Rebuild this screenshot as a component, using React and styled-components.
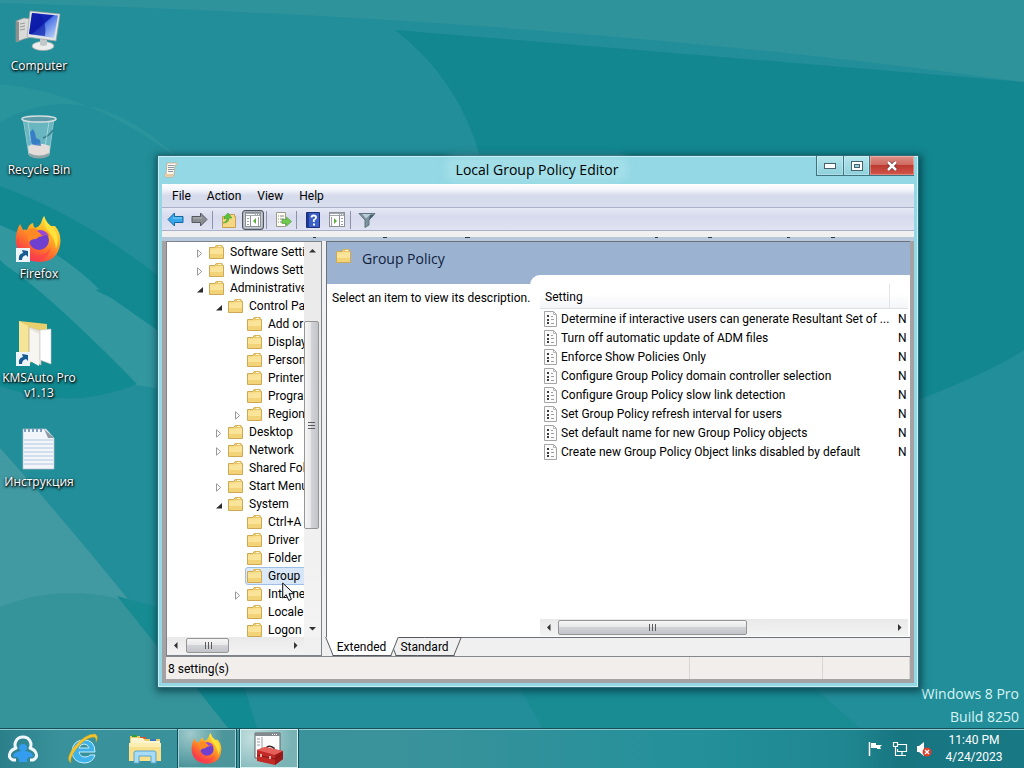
import React, { useState } from "react";
import styled, { createGlobalStyle, css } from "styled-components";

const GlobalStyle = createGlobalStyle`
  * {
    box-sizing: border-box;
  }

  body {
    margin: 0;
    font-family: "Open Sans", "Noto Sans", sans-serif;
    font-size: 12px;
    line-height: 16px;
    color: #000;
  }

  button {
    margin: 0;
    padding: 0;
    border: 0;
    background: none;
    font: inherit;
    color: inherit;
  }

  svg {
    display: block;
    flex: none;
  }
`;

const Screen = styled.div`
  display: flex;
  flex-direction: column;
  min-height: 100vh;
  overflow: hidden;
  background: #228e99;
`;

const Desktop = styled.main`
  position: relative;
  flex: 1;
`;

const WallpaperArt = styled.svg`
  position: absolute;
  top: 0;
  left: 0;
  width: 100%;
  height: 100%;
`;

/* desktop shortcuts */

const Shortcuts = styled.nav`
  position: relative;
  display: flex;
  flex-direction: column;
  width: 78px;
`;

const Shortcut = styled.a`
  display: flex;
  flex-direction: column;
  align-items: center;
  gap: 2px;
  height: 104px;
  padding-top: 8px;
  color: #fff;
  line-height: 15px;
  text-align: center;
  text-decoration: none;
  text-shadow: 1px 1px 2px #000, 0 1px 3px #000;
`;

const Watermark = styled.div`
  position: absolute;
  right: 5px;
  bottom: 0;
  color: #d8f4f6;
  font-size: 14px;
  line-height: 23px;
  text-align: right;
`;

/* window frame */

const Window = styled.section`
  position: absolute;
  top: 155px;
  right: 105px;
  bottom: 40px;
  left: 157px;
  display: flex;
  flex-direction: column;
  padding: 0 4px 4px;
  border: 1px solid #2d6b77;
  background: #93d8e4;
  box-shadow: inset 0 0 0 1px #c6f1f6, 1px 2px 7px 2px rgba(0, 40, 50, 0.6);
`;

const TitleBar = styled.header`
  display: flex;
  align-items: center;
  flex: none;
  height: 28px;
  padding-left: 2px;
`;

const Title = styled.h1`
  flex: 1;
  margin: 0 0 0 80px;
  font-size: 14px;
  font-weight: 400;
  line-height: 20px;
  text-align: center;

  span {
    padding: 0 8px;
    border-radius: 8px;
    background: rgba(190, 236, 240, 0.35);
    box-shadow: 0 0 8px 3px rgba(190, 236, 240, 0.35);
  }
`;

const Captions = styled.div`
  display: flex;
  align-self: flex-start;
  border: solid #3c7482;
  border-width: 0 0 1px 1px;
`;

const Caption = styled.button`
  display: flex;
  align-items: center;
  justify-content: center;
  width: ${(p) => (p.$close ? 45 : 26)}px;
  height: 19px;
  border-left: ${(p) => (p.$first ? 0 : "1px solid #3c7482")};
  background: ${(p) =>
    p.$close
      ? "linear-gradient(#dd9187 0, #cf6b60 45%, #bd3a30 50%, #d2564a 100%)"
      : "linear-gradient(#b4e6ec, #8ed0dc)"};
  box-shadow: inset 0 0 0 1px rgba(255, 255, 255, 0.3);
`;

const Client = styled.div`
  display: flex;
  flex: 1;
  flex-direction: column;
  min-height: 0;
  padding-bottom: 4px;
  background: #a5a2a3;
  font-family: Roboto, "Open Sans", sans-serif;
`;

const MenuBar = styled.nav`
  display: flex;
  flex: none;
  height: 24px;
  padding: 0 2px;
  border-bottom: 1px solid #a9b2c9;
  background: linear-gradient(#fff 0, #f4f5fa 25%, #d6dbec 50%, #d9deed 100%);
`;

const MenuItem = styled.button`
  padding: 0 8px;
`;

const Toolbar = styled.div`
  display: flex;
  align-items: center;
  gap: 2px;
  flex: none;
  height: 23px;
  padding: 1px 2px 0;
  border-bottom: 1px solid #a9b2c9;
  background: linear-gradient(#e6e9f6, #d7dbed 40%, #dfe2f2);
`;

const Tool = styled.button`
  display: flex;
  align-items: center;
  justify-content: center;
  width: 22px;
  height: 20px;
  ${(p) =>
    p.$pressed &&
    css`
      border: 1px solid #50575f;
      border-radius: 3px;
      background: #cdd2dc;
      box-shadow: inset 0 0 2px #555;
    `}
`;

const Separator = styled.span`
  width: 1px;
  height: 18px;
  margin-right: 3px;
  background: #8a93a8;
`;

const Strip = styled.div`
  flex: none;
  height: 10px;
  padding-top: 6px;
  background: linear-gradient(#f0f0f0 6px, #b6c8da 6px);
`;

const Body = styled.div`
  display: flex;
  gap: 4px;
  flex: 1;
  min-height: 0;
  margin: 0 4px;
  background: #f0f0f0;
`;

/* tree pane */

const TreePane = styled.aside`
  display: grid;
  grid-template-columns: 1fr 17px;
  grid-template-rows: 1fr 17px;
  width: 156px;
  padding-bottom: 1px;
  border: 1px solid #7d828b;
  background: #f0f0f0;
`;

const Tree = styled.ul`
  min-height: 0;
  margin: 0;
  padding: 1px 0 0;
  overflow: hidden;
  background: #fff;
  list-style: none;
`;

const TreeRow = styled.li`
  display: flex;
  height: 18px;
  padding-left: ${(p) => 27 + p.$level * 19}px;
  white-space: nowrap;
`;

const Expander = styled.button`
  display: flex;
  align-items: center;
  flex: none;
  width: 13px;
  padding: 2px 0 0 3px;
`;

const NodeLabel = styled.button`
  display: flex;
  flex: none;
  align-items: center;
  gap: 6px;
  min-width: 160px;
  padding-left: 1px;
  border: 1px solid transparent;
  ${(p) =>
    p.$selected &&
    css`
      border-color: #9ec0e6;
      border-radius: 3px;
      background: linear-gradient(90deg, #dce9f8, #cbe0f7);
    `}
`;

/* scrollbars */

const ScrollBar = styled.div`
  display: flex;
  flex-direction: ${(p) => (p.$vertical ? "column" : "row")};
  align-items: stretch;
  background: linear-gradient(#e9e9e9, #f3f3f3);
`;

const ScrollArrow = styled.button`
  display: flex;
  align-items: center;
  justify-content: center;
  flex: none;
  width: 17px;
  height: 17px;
`;

const ScrollGap = styled.span`
  flex: ${(p) => p.$grow};
`;

const Thumb = styled.span`
  display: flex;
  align-items: center;
  justify-content: center;
  flex: ${(p) => p.$grow};
  margin: ${(p) => (p.$vertical ? "0 2px 0 0" : "1px 0")};
  border: 1px solid #959595;
  border-radius: 2px;
  background: linear-gradient(
    ${(p) => (p.$vertical ? "90deg" : "180deg")},
    #f6f6f6 0,
    #e8e8ea 45%,
    #d2d3d7 50%,
    #c3c4c9 100%
  );
`;

/* result pane */

const ResultPane = styled.section`
  display: flex;
  flex: 1;
  flex-direction: column;
  min-width: 0;
`;

const View = styled.div`
  display: flex;
  flex: 1;
  flex-direction: column;
  min-height: 0;
  border: solid #6b7079;
  border-width: 1px 0 0 1px;
  background: #9bb3d1;
`;

const ViewHeader = styled.header`
  display: flex;
  gap: 11px;
  flex: none;
  height: 33px;
  padding: 6px 0 0 9px;
`;

const ViewTitle = styled.h2`
  margin: 0;
  color: #10203c;
  font-family: "Open Sans", sans-serif;
  font-size: 14px;
  font-weight: 400;
  line-height: 21px;
`;

const Columns = styled.div`
  display: flex;
  flex: 1;
  min-height: 0;
`;

const Description = styled.p`
  flex: none;
  width: 203px;
  margin: 9px 0 0;
  padding: 6px 0 0 5px;
  background: #fff;
  white-space: nowrap;
`;

const ListArea = styled.div`
  display: flex;
  flex: 1;
  flex-direction: column;
  justify-content: space-between;
  min-width: 0;
  padding: 9px 2px 1px 10px;
  border-radius: 10px 0 0 0;
  background: #fff;
`;

const TableClip = styled.div`
  overflow: hidden;
`;

const Table = styled.table`
  width: 100%;
  border-collapse: separate;
  border-spacing: 0;
  table-layout: fixed;
`;

const StateColumn = styled.col`
  width: 19px;
`;

const HeadCell = styled.th`
  height: 25px;
  padding: 2px 5px 0;
  border-bottom: 1px solid #dcdfe4;
  background: linear-gradient(#fff 40%, #f4f5f7);
  font-weight: 400;
  text-align: left;

  & + & {
    border-left: 1px solid #e1e4e9;
  }
`;

const Cell = styled.td`
  height: 19px;
  padding: 0 0 0 ${(p) => p.$pad}px;
  white-space: nowrap;
`;

const Setting = styled.span`
  display: flex;
  align-items: center;
  gap: 3px;
`;

const Tabs = styled.div`
  display: flex;
  flex: none;
  height: 19px;
`;

const TabFill = styled.span`
  flex: 1;
  border-top: 1px solid #6b7079;
`;

const Tab = styled.button`
  position: relative;
  z-index: ${(p) => (p.$active ? 1 : 0)};
  width: 71px;
  margin-right: -8px;

  &:last-of-type {
    margin-right: -4px;
  }

  &::before,
  &::after {
    content: "";
    position: absolute;
    z-index: -1;
    top: 0;
    bottom: 0;
    left: 3px;
    width: 50%;
    border: solid #55595f;
    border-width: ${(p) => (p.$active ? "0" : "1px")} 0 1px 1px;
    background: ${(p) => (p.$active ? "#fff" : "#f0f0f0")};
    transform: skewX(22deg);
  }

  &::after {
    right: 3px;
    left: auto;
    border-width: ${(p) => (p.$active ? "0" : "1px")} 1px 1px 0;
    transform: skewX(-22deg);
  }
`;

const StatusBar = styled.footer`
  display: flex;
  flex: none;
  height: 23px;
  margin: 0 4px;
  border-top: 1px solid #85888d;
  background: #f1eeec;
`;

const StatusCell = styled.span`
  flex: ${(p) => (p.$width ? "none" : 1)};
  width: ${(p) => p.$width || "auto"};
  padding: 4px 2px 0;
  border-right: 1px solid #d8d5d3;
`;

/* taskbar */

const Taskbar = styled.footer`
  position: relative;
  display: flex;
  align-items: stretch;
  height: 40px;
  border-top: 1px solid #174e58;
  background: linear-gradient(90deg, #2b7f8a 0, #39929b 60px, #3a929b 400px, #23909a 700px, #1f8690 850px, #177580 900px, #187985 100%);
  box-shadow: inset 0 1px 0 #8accd2;
`;

const TaskButtons = styled.nav`
  display: flex;
  gap: 4px;
  flex: 1;
`;

const TaskButton = styled.button`
  display: flex;
  align-items: center;
  justify-content: center;
  width: ${(p) => (p.$first ? 50 : 58)}px;
  padding-right: ${(p) => (p.$first ? 4 : 0)}px;
  ${(p) =>
    p.$open &&
    css`
      border: 1px solid ${p.$active ? "#d9f3f3" : "#9fd3d6"};
      background: ${p.$active
        ? "radial-gradient(circle at 20% 20%, #c4dfdf, #79b3b6 75%)"
        : "radial-gradient(circle at 20% 10%, #9fcacc, #4b959b 60%)"};
      box-shadow: 0 0 0 1px #12515b;
    `}
`;

const Tray = styled.div`
  display: flex;
  align-items: center;
  gap: 8px;
  padding-right: 16px;
  color: #fff;
`;

const Clock = styled.time`
  width: 68px;
  font-family: Roboto, "Open Sans", sans-serif;
  line-height: 17px;
  text-align: center;
`;

const Pointer = styled.svg`
  position: absolute;
  top: 582px;
  left: 282px;
`;

const Wallpaper = () => (
  <WallpaperArt viewBox="0 0 1024 728" preserveAspectRatio="none" aria-hidden="true">
    <rect width="1024" height="728" fill="#228e99" />
    <path d="M395 30Q460 80 481 160L700 400H918Q990 372 1024 350V82Z" fill="#128790" />
    <path d="M0 0H1024V82Q560 18 0 3Z" fill="#2f939c" />
    <path d="M0 84Q90 92 180 160Q90 72 0 122Z" fill="#2a949d" />
    <path d="M0 186Q80 215 157 275V380L0 300Z" fill="#128991" />
    <path d="M0 225Q60 250 100 290L157 330V388L135 385Q70 330 0 260Z" fill="#3397a0" />
    <path d="M0 262Q40 285 137 384Q70 412 0 386Z" fill="#128a91" />
    <path d="M95 290L157 320V280Z" fill="#128991" />
    <path d="M0 448Q100 560 230 728H0Z" fill="#4199a2" />
    <path d="M0 607Q70 578 157 610L200 680L228 728H0Z" fill="#35939a" />
    <path d="M117 596L157 607V646Z" fill="#178b92" />
    <path d="M190 680H242L257 728H228Z" fill="#128a91" />
    <path d="M515 680L543 728H860L805 680Z" fill="#188b93" />
  </WallpaperArt>
);

const ComputerIcon = () => (
  <svg width="48" height="48" viewBox="0 0 48 48">
    <defs>
      <linearGradient id="monitor" x1="0" x2="1" y2="1">
        <stop offset="0" stopColor="#1730c4" />
        <stop offset=".45" stopColor="#1022b0" />
        <stop offset=".5" stopColor="#4f78e8" />
        <stop offset="1" stopColor="#c9dffb" />
      </linearGradient>
    </defs>
    <path d="M1 13l8-3 8 1v18l-8 2-8 3z" fill="#d9dbd8" stroke="#8e9494" strokeWidth=".7" />
    <path d="M1 13l3 1v20l-3 0z" fill="#8b8f8e" />
    <path d="M5 16l5-1M5 19l5-1M5 22l5-1" stroke="#999" />
    <ellipse cx="28" cy="38" rx="11" ry="4.500" fill="#eceeed" stroke="#9fa6a6" strokeWidth=".7" />
    <path d="M25 29l7 1v7q-4 2-7 0z" fill="#c3c8c8" />
    <path d="M15 3l30 3-4 27-29-4z" fill="#e3e5e4" stroke="#9aa1a4" strokeWidth=".7" />
    <path d="M17 5l26 2.500-4 22.500-25-4z" fill="url(#monitor)" />
    <path d="M17 5l8 1q7 9 5 22l-16-2z" fill="#0b18a4" opacity=".65" />
  </svg>
);

const BinIcon = () => (
  <svg width="48" height="48" viewBox="0 0 48 48">
    <path d="M8 6l6 37q10 5 20 0l5-37z" fill="#8fcbd6" opacity=".65" stroke="#c7e6ea" />
    <path d="M13 34l1 9q10 5 20 0l1-9q-11-5-22 0z" fill="#e4ddd9" />
    <path d="M14 41q10 5 20 0v3q-10 5-20 0z" fill="#92a6aa" />
    <path d="M15 31V20l3-3 2 4 1 5 4 2 1 6-7-1z" fill="#2a72c6" opacity=".8" />
    <path d="M28 26q6-2 10-8" fill="none" stroke="#367f8c" strokeWidth="1.500" />
    <path d="M13 10l4 28M34 10l-4 25" stroke="#c9edf0" opacity=".6" />
    <ellipse cx="24" cy="7" rx="17" ry="3" fill="#5e9ba8" stroke="#d5dfe0" strokeWidth="1.500" />
  </svg>
);

const Badge = () => (
  <g>
    <rect x="1" y="32" width="14" height="14" fill="#eef5fa" />
    <path d="M4 44q-1-6 4-7l-1-3 6 1v6l-2-2q-4 1-4 5z" fill="#175a94" />
  </g>
);

const FirefoxArt = () => (
  <g>
    <defs>
      <linearGradient id="fox" x1=".8" x2=".2" y1="0" y2="1">
        <stop offset="0" stopColor="#fff04a" />
        <stop offset=".35" stopColor="#ffb224" />
        <stop offset=".65" stopColor="#ff6a2f" />
        <stop offset="1" stopColor="#f0245e" />
      </linearGradient>
    </defs>
    <path d="M29 0q2 7 7 10l4 0q7 8 5 19-3 17-21 17Q4 45 1 27 0 17 5 8l3 6q2-1 4 0 2-6 6-7 0 3 2 5 4-1 6-5 1-4 3-7z" fill="url(#fox)" />
    <circle cx="24" cy="24" r="10" fill="#6f3fd0" />
    <path d="M14 13q6-2 10 2 8-2 11 6-5-4-7-1-4 0-7 3-6 0-7 4-3-6 0-14z" fill="#ff8a25" />
    <path d="M22 15q7-3 12 5-4-3-7 0-1-3-5-5z" fill="#9646dd" />
    <path d="M3 20q1 17 15 19 13 2 18-8-3 14-17 14Q5 44 2 28z" fill="#ff3d4c" opacity=".6" />
    <path d="M29 0q2 7 9 12 8 9 3 21-1-10-6-16-7-7-6-17z" fill="#ffe23c" />
  </g>
);

const FirefoxIcon = () => (
  <svg width="48" height="48" viewBox="0 0 48 48">
    <FirefoxArt />
    <Badge />
  </svg>
);

const ZipFolderIcon = () => (
  <svg width="48" height="48" viewBox="0 0 48 48">
    <path d="M4 1l28 3v32L12 44 4 35z" fill="#e8cf6c" />
    <path d="M4 1l9 5v40l-9-7z" fill="#f6e596" />
    <path d="M14 7l12 4v34l-12-5z" fill="#e9e4dc" stroke="#c9c3b8" strokeWidth=".6" />
    <path d="M25 10l11-1v35l-11-4z" fill="#fff" stroke="#c5c5c5" strokeWidth=".6" />
    <path d="M15 9l9 5v32l-9-5z" fill="#f7f5f1" />
    <Badge />
  </svg>
);

const NoteIcon = () => (
  <svg width="48" height="48" viewBox="0 0 48 48">
    <path d="M8 5h23l8 9v31H8z" fill="#f2f5fa" stroke="#b5c2cc" strokeWidth=".7" />
    <path d="M29 5l10 9h-6z" fill="#8b9aa4" />
    <path d="M9 16h29M9 20h29M9 24h29M9 28h29M9 32h29M9 36h29M9 40h29" stroke="#b5c6dc" />
    <path d="M10 5v3m4-3v3m4-3v3m4-3v3m4-3v3" stroke="#5f84a8" strokeWidth="1.500" />
  </svg>
);

const FolderIcon = () => (
  <svg width="15" height="16" viewBox="0 0 15 16">
    <path d="M.5 3.500h5.500l1-2h6l.5 2h1v11H.5z" fill="#f6dc87" stroke="#cda955" />
    <path d="M7.500 3V1.500h5V4h-6z" fill="#e9c565" />
    <path d="M9 2.500h3" stroke="#fff8d8" />
    <path d="M1 5.500h6l1-1h6V14H1z" fill="#fae49a" />
    <path d="M1 10h13v4H1z" fill="#f3d378" />
  </svg>
);

const ScrollDocIcon = () => (
  <svg width="14" height="16" viewBox="0 0 14 16">
    <path d="M3 1h9q2 0 1 2h-2l-1 9q0 3-2 3H2q-2 0-1-3h1z" fill="#fbf8f0" stroke="#c2a888" strokeWidth=".8" />
    <path d="M4 3.500h6M4 5.500h6M4 7.500h6M4 9.500h5" stroke="#8f9aa8" />
    <path d="M1 12h8v2.500H2z" fill="#e9c9a2" />
  </svg>
);

const PolicyIcon = () => (
  <svg width="14" height="16" viewBox="0 0 14 16">
    <path d="M.5.500h9l3 3v12H.5z" fill="#fbfbfb" stroke="#a3a5a7" />
    <path d="M9.500.500v3h3" fill="none" stroke="#b4b6b8" />
    <path d="M3 4h2v2H3zM3 8h2v2H3zM3 11h2v2H3z" fill="#3a3a3a" />
    <path d="M7 5.500h2M7 8.500h3M7 12.500h3" stroke="#9a9da1" />
  </svg>
);

const ArrowIcon = ({ forward }) => (
  <svg width="17" height="15" viewBox="0 0 17 15">
    <path
      d={forward ? "M16 7.500L9.500 1v3.500H1v6h8.500V14z" : "M1 7.500L7.500 1v3.500H16v6H7.500V14z"}
      fill={forward ? "#8b8e93" : "#35a7ea"}
      stroke={forward ? "#55585d" : "#14669f"}
    />
    <path d={forward ? "M2 6h9" : "M6 6h9"} stroke={forward ? "#b6b9bd" : "#8bd3fb"} />
  </svg>
);

const UpFolderIcon = () => (
  <svg width="16" height="16" viewBox="0 0 16 16">
    <path d="M1.500 4.500h6l1-2h5v2h1v11h-13z" fill="#f4d883" stroke="#c9a04f" />
    <path d="M2 11q4-1 4-5L3 7V5l4-4 4 5-3 0q0 5-6 5z" fill="#5cc23b" stroke="#3a9427" strokeWidth=".5" />
  </svg>
);

const PaneIcon = ({ right }) => (
  <svg width="16" height="15" viewBox="0 0 16 15">
    <rect x=".5" y=".5" width="15" height="14" fill="#fff" stroke="#8b9097" />
    <path d="M1 1h14v3H1z" fill="#a2a7ae" />
    <path d="M1 2.500h9m1 0h1m1 0h1" stroke="#fff" />
    <path d={right ? "M10.500 4v10" : "M5.500 4v10"} stroke="#8b9097" />
    <path
      d={right ? "M12 6.500h2M12 9.500h2M12 12.500h2M2.500 5v9" : "M2 6.500h2M2 9.500h2M2 12.500h2M13.500 5v9"}
      stroke="#9aa0a8"
    />
    <path d={right ? "M5 6v6l3-3z" : "M11 6v6L8 9z"} fill="#5fae3b" />
  </svg>
);

const ExportIcon = () => (
  <svg width="17" height="16" viewBox="0 0 17 16">
    <path d="M1.500.500h9v14h-9z" fill="#fffdf0" stroke="#9d9b8f" />
    <path d="M3 4h1m1 0h4M3 7h1m1 0h4M3 10h1m1 0h4" stroke="#7d8792" />
    <path d="M7 7.500h4.500V5l5 4.500-5 4.500v-2.500H7z" fill="#71ca4f" stroke="#3f9a2b" strokeWidth=".6" />
  </svg>
);

const HelpIcon = () => (
  <svg width="14" height="16" viewBox="0 0 14 16">
    <path d="M.5.500h13v15H.5z" fill="#3a5fc8" stroke="#1c2f78" />
    <path d="M1 1h2v14H1z" fill="#1f3a94" />
    <path d="M5.500 5.500q0-2 2.300-2t2.200 2q0 1.500-2.200 2.500v2" fill="none" stroke="#fff" strokeWidth="1.800" />
    <path d="M7 11.500h2v2H7z" fill="#fff" />
  </svg>
);

const FilterIcon = () => (
  <svg width="18" height="16" viewBox="0 0 18 16">
    <path d="M1 1.500h16L11 8v5l-4 2.500V8z" fill="#7d919c" stroke="#5f7480" />
    <path d="M4 2h9L8 6.500z" fill="#b9ccd5" />
    <path d="M12 3h4l-5 5z" fill="#42606d" />
  </svg>
);

const ExpandGlyph = ({ open }) => (
  <svg width="7" height="9" viewBox="0 0 7 9">
    {open ? (
      <path d="M6 2v5.500H0z" fill="#2b2b2b" />
    ) : (
      <path d="M.5.800v7.400L4.700 4.500z" fill="#fff" stroke="#9a9a9a" />
    )}
  </svg>
);

const arrowPaths = {
  up: "M0 5.500L3.500 2 7 5.500z",
  down: "M0 2l3.500 3.500L7 2z",
  left: "M5.500 0L2 3.500 5.500 7z",
  right: "M2 0l3.500 3.500L2 7z",
};

const Chevron = ({ to }) => (
  <svg width="7" height="7" viewBox="0 0 7 7">
    <path d={arrowPaths[to]} fill="#333" />
  </svg>
);

const Grip = ({ vertical }) => (
  <svg width="8" height="8" viewBox="0 0 8 8">
    <path
      d={vertical ? "M0 1.500h7M0 4.500h7M0 7.500h7" : "M1.500 0v7M4.500 0v7M7.500 0v7"}
      stroke="#5c5c5c"
    />
  </svg>
);

const AgentIcon = () => (
  <svg width="32" height="30" viewBox="0 0 32 30">
    <path
      d="M9 26H6q-5-2-3-7 1-3 6-5-2-3 0-7 2-4 7-4t7 4q2 4 0 7 5 2 6 5 2 5-3 7h-3"
      fill="none"
      stroke="#f0f7fb"
      strokeWidth="3"
      strokeLinejoin="round"
    />
    <path d="M16 10q4 0 4 3.500 0 2-2 3.500 8 1 8 6h-4l-2 2v3h-8v-3l-2-2H6q0-5 8-6-2-1.500-2-3.500Q12 10 16 10z" fill="#359df0" />
  </svg>
);

const ExplorerEIcon = () => (
  <svg width="32" height="32" viewBox="0 0 32 32">
    <path
      fillRule="evenodd"
      d="M28 19H12q1 5 6 5 4 0 5-2h5q-2 8-11 8Q5 29 5 18 6 7 17 7q11 0 11 12zm-6-4q-1-4-5-4-4 0-5 4z"
      fill="#3fb2ea"
      stroke="#c5ecfb"
    />
    <path d="M4 30Q-2 26 7 14 18 1 28 1q4 2 1 8 1-5-3-5-8 1-16 11-8 10-6 15z" fill="#f5c62b" stroke="#dba51d" strokeWidth=".5" />
  </svg>
);

const ExplorerIcon = () => (
  <svg width="34" height="32" viewBox="0 0 34 32">
    <path d="M2 3h10v3h20v21H2z" fill="#e9cb69" />
    <path d="M4 2h5v2H4z" fill="#2f9c3e" />
    <path d="M12 4h6v2h-6z" fill="#d9532a" />
    <path d="M22 6h6v2h-6z" fill="#3578c4" />
    <path d="M3 5h12l2 3h15v3H3z" fill="#fff6cf" />
    <path d="M1 10h32v18H1z" fill="#f8e08a" />
    <path d="M1 10h32v4H1z" fill="#fceeb0" />
    <path d="M6 30V20q0-2 2-2h18q2 0 2 2v10h-5v-7H11v7z" fill="#a8dcf5" stroke="#5aa5cf" />
  </svg>
);

const ToolboxIcon = () => (
  <svg width="34" height="34" viewBox="0 0 34 34">
    <path d="M3 1h25v25H3z" fill="#fbfbfb" stroke="#5b6266" />
    <path d="M3 1h25v3H3z" fill="#83898d" />
    <path d="M20 2.500h1m1 0h1m1 0h1" stroke="#fff" />
    <path d="M5 7h3M5 10h3M5 13h3M10 5v12" stroke="#9aa0a5" />
    <path d="M15 17v-2q3-2 7 1v2" fill="none" stroke="#3a2222" strokeWidth="1.500" />
    <path d="M5 18l8-3 18 4v8l-8 6-18-4z" fill="#c22a26" />
    <path d="M5 18l8-3 18 4-8 4z" fill="#e4605a" />
    <path d="M23 23v10l8-6v-8z" fill="#9b1b1b" />
    <path d="M5 23l18 4 8-5" fill="none" stroke="#8c1512" />
    <path d="M9 22v3m9-1v3" stroke="#e8dfdf" strokeWidth="1.500" />
  </svg>
);

const FlagIcon = () => (
  <svg width="16" height="16" viewBox="0 0 16 16">
    <path d="M1.500 1v14" stroke="#fff" strokeWidth="1.500" />
    <path d="M3 2h5v2h6l-2 2 1 2H9V7H3z" fill="#fff" />
  </svg>
);

const NetworkIcon = () => (
  <svg width="16" height="16" viewBox="0 0 16 16">
    <path d="M6 3.500h8.500v7H5.500V8M10 11v3M6 14.500h8" fill="none" stroke="#fff" strokeWidth="1.200" />
    <path d="M1.500 1.500h4v4h-4zM3.500 6v8.500H7" fill="none" stroke="#fff" strokeWidth="1.200" />
  </svg>
);

const MutedIcon = () => (
  <svg width="16" height="16" viewBox="0 0 16 16">
    <path d="M1 5h2l5-4v14l-5-4H1z" fill="#fff" />
    <circle cx="11" cy="11" r="4.500" fill="#d8402f" />
    <path d="M9 9l4 4m0-4l-4 4" stroke="#fff" strokeWidth="1.300" />
  </svg>
);

const shortcuts = [
  { name: "Computer", Icon: ComputerIcon },
  { name: "Recycle Bin", Icon: BinIcon },
  { name: "Firefox", Icon: FirefoxIcon },
  { name: "KMSAuto Pro v1.13", Icon: ZipFolderIcon },
  { name: "Инструкция", Icon: NoteIcon },
];

const nodes = [
  { name: "Software Setti", level: 0, state: "closed" },
  { name: "Windows Sett", level: 0, state: "closed" },
  { name: "Administrative", level: 0, state: "open" },
  { name: "Control Pa", level: 1, state: "open" },
  { name: "Add or", level: 2 },
  { name: "Display", level: 2 },
  { name: "Person", level: 2 },
  { name: "Printer", level: 2 },
  { name: "Progra", level: 2 },
  { name: "Region", level: 2, state: "closed" },
  { name: "Desktop", level: 1, state: "closed" },
  { name: "Network", level: 1, state: "closed" },
  { name: "Shared Fol", level: 1 },
  { name: "Start Menu", level: 1, state: "closed" },
  { name: "System", level: 1, state: "open" },
  { name: "Ctrl+A", level: 2 },
  { name: "Driver", level: 2 },
  { name: "Folder", level: 2 },
  { name: "Group", level: 2 },
  { name: "Interne", level: 2, state: "closed" },
  { name: "Locale", level: 2 },
  { name: "Logon", level: 2 },
];

const settings = [
  "Determine if interactive users can generate Resultant Set of ...",
  "Turn off automatic update of ADM files",
  "Enforce Show Policies Only",
  "Configure Group Policy domain controller selection",
  "Configure Group Policy slow link detection",
  "Set Group Policy refresh interval for users",
  "Set default name for new Group Policy objects",
  "Create new Group Policy Object links disabled by default",
];

const Scroll = ({ vertical, before, thumb, after }) => (
  <ScrollBar $vertical={vertical}>
    <ScrollArrow aria-label={vertical ? "Scroll up" : "Scroll left"}>
      <Chevron to={vertical ? "up" : "left"} />
    </ScrollArrow>
    <ScrollGap $grow={before} />
    <Thumb $vertical={vertical} $grow={thumb}>
      <Grip vertical={vertical} />
    </Thumb>
    <ScrollGap $grow={after} />
    <ScrollArrow aria-label={vertical ? "Scroll down" : "Scroll right"}>
      <Chevron to={vertical ? "down" : "right"} />
    </ScrollArrow>
  </ScrollBar>
);

const TreeView = () => {
  const [selected, setSelected] = useState("Group");

  return (
    <TreePane>
      <Tree role="tree">
        {nodes.map(({ name, level, state }) => (
          <TreeRow key={name} $level={level} role="treeitem" aria-selected={name === selected}>
            {state ? (
              <Expander aria-label={`Toggle ${name}`}>
                <ExpandGlyph open={state === "open"} />
              </Expander>
            ) : (
              <Expander as="span" />
            )}
            <NodeLabel $selected={name === selected} onClick={() => setSelected(name)}>
              <FolderIcon />
              {name}
            </NodeLabel>
          </TreeRow>
        ))}
      </Tree>
      <Scroll vertical before={62} thumb={207} after={92} />
      <Scroll before={2} thumb={42} after={59} />
    </TreePane>
  );
};

const Result = () => {
  const [tab, setTab] = useState("Extended");

  return (
    <ResultPane>
      <View>
        <ViewHeader>
          <FolderIcon />
          <ViewTitle>Group Policy</ViewTitle>
        </ViewHeader>
        <Columns>
          <Description>Select an item to view its description.</Description>
          <ListArea>
            <TableClip>
              <Table>
                <colgroup>
                  <col />
                  <StateColumn />
                </colgroup>
                <thead>
                  <tr>
                    <HeadCell>Setting</HeadCell>
                    <HeadCell aria-label="State" />
                  </tr>
                </thead>
                <tbody>
                  {settings.map((name) => (
                    <tr key={name}>
                      <Cell $pad={4}>
                        <Setting>
                          <PolicyIcon />
                          {name}
                        </Setting>
                      </Cell>
                      <Cell $pad={9}>N</Cell>
                    </tr>
                  ))}
                </tbody>
              </Table>
            </TableClip>
            <Scroll before={1} thumb={188} after={145} />
          </ListArea>
        </Columns>
      </View>
      <Tabs>
        {["Extended", "Standard"].map((name) => (
          <Tab key={name} $active={name === tab} onClick={() => setTab(name)}>
            {name}
          </Tab>
        ))}
        <TabFill />
      </Tabs>
    </ResultPane>
  );
};

const PolicyEditor = () => (
  <Window>
    <TitleBar>
      <ScrollDocIcon />
      <Title>
        <span>Local Group Policy Editor</span>
      </Title>
      <Captions>
        <Caption $first aria-label="Minimize">
          <svg width="12" height="6" viewBox="0 0 12 6">
            <rect x=".5" y=".5" width="11" height="5" fill="#fff" stroke="#46616c" />
          </svg>
        </Caption>
        <Caption aria-label="Maximize">
          <svg width="12" height="10" viewBox="0 0 12 10">
            <rect x=".5" y=".5" width="11" height="9" fill="#fff" stroke="#46616c" />
            <rect x="3.500" y="3.500" width="5" height="3" fill="#8fd0dc" stroke="#46616c" />
          </svg>
        </Caption>
        <Caption $close aria-label="Close">
          <svg width="12" height="10" viewBox="0 0 12 10">
            <path d="M2 1l8 8M10 1L2 9" stroke="#6b3030" strokeWidth="4" />
            <path d="M2 1l8 8M10 1L2 9" stroke="#fff" strokeWidth="2.500" />
          </svg>
        </Caption>
      </Captions>
    </TitleBar>
    <Client>
      <MenuBar>
        {["File", "Action", "View", "Help"].map((name) => (
          <MenuItem key={name}>{name}</MenuItem>
        ))}
      </MenuBar>
      <Toolbar>
        <Tool aria-label="Back">
          <ArrowIcon />
        </Tool>
        <Tool aria-label="Forward">
          <ArrowIcon forward />
        </Tool>
        <Separator />
        <Tool aria-label="Up one level">
          <UpFolderIcon />
        </Tool>
        <Tool $pressed aria-label="Show console tree">
          <PaneIcon />
        </Tool>
        <Separator />
        <Tool aria-label="Export list">
          <ExportIcon />
        </Tool>
        <Separator />
        <Tool aria-label="Help">
          <HelpIcon />
        </Tool>
        <Tool aria-label="Show action pane">
          <PaneIcon right />
        </Tool>
        <Separator />
        <Tool aria-label="Filter">
          <FilterIcon />
        </Tool>
      </Toolbar>
      <Strip>
        <svg width="752" height="2" viewBox="0 0 752 2">
          <path d="M151 .5h3M221 .5h4M303 .5h5M493 .5h3M546 .5h4M625 .5h3M669 .5h4" stroke="#2d3b48" />
        </svg>
      </Strip>
      <Body>
        <TreeView />
        <Result />
      </Body>
      <StatusBar>
        <StatusCell>8 setting(s)</StatusCell>
        <StatusCell $width="133px" />
        <StatusCell $width="87px" />
      </StatusBar>
    </Client>
  </Window>
);

const App = () => (
  <Screen>
    <GlobalStyle />
    <Desktop>
      <Wallpaper />
      <Shortcuts>
        {shortcuts.map(({ name, Icon }) => (
          <Shortcut key={name} href="#">
            <Icon />
            {name}
          </Shortcut>
        ))}
      </Shortcuts>
      <Watermark>
        Windows 8 Pro
        <br />
        Build 8250
      </Watermark>
      <PolicyEditor />
      <Pointer width="13" height="20" viewBox="0 0 13 20">
        <path d="M.7 1v15l3.500-3.300 2.600 5.800 2.600-1.200L7 11.700h5z" fill="#eef3f6" stroke="#111" />
      </Pointer>
    </Desktop>
    <Taskbar>
      <TaskButtons>
        <TaskButton $first aria-label="Remote support">
          <AgentIcon />
        </TaskButton>
        <TaskButton aria-label="Internet Explorer">
          <ExplorerEIcon />
        </TaskButton>
        <TaskButton aria-label="File Explorer">
          <ExplorerIcon />
        </TaskButton>
        <TaskButton $open aria-label="Firefox">
          <svg width="32" height="32" viewBox="0 0 48 48">
            <FirefoxArt />
          </svg>
        </TaskButton>
        <TaskButton $open $active aria-label="Local Group Policy Editor">
          <ToolboxIcon />
        </TaskButton>
      </TaskButtons>
      <Tray>
        <FlagIcon />
        <NetworkIcon />
        <MutedIcon />
        <Clock>
          11:40 PM
          <br />
          4/24/2023
        </Clock>
      </Tray>
    </Taskbar>
  </Screen>
);

export default App;
